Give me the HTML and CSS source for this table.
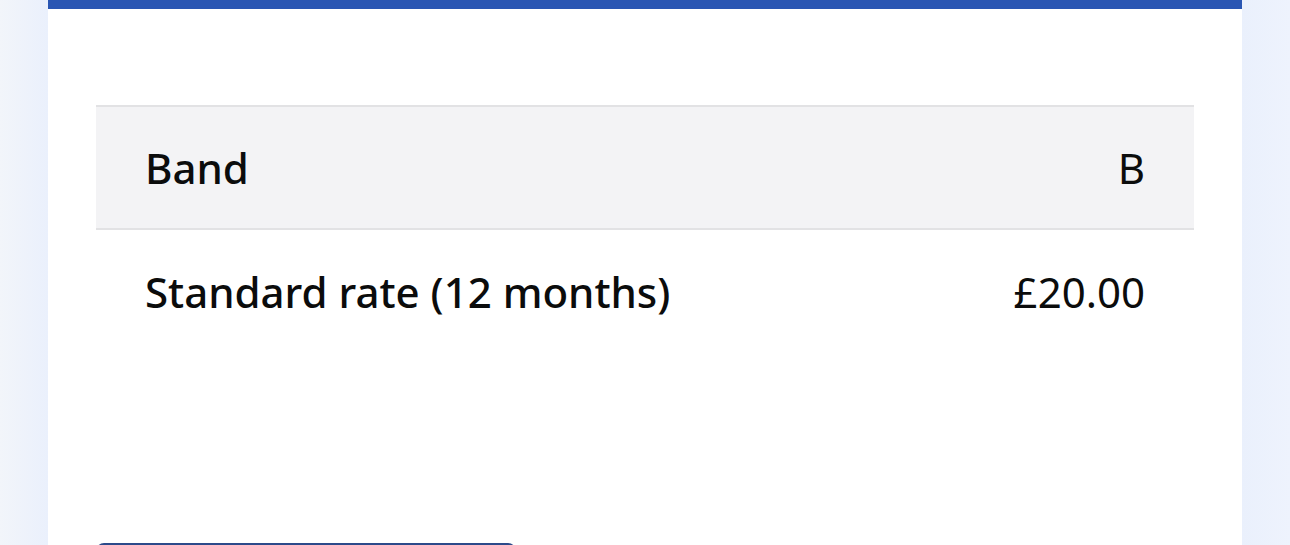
FILE: index.html
```html
<!DOCTYPE html>
<html lang="en">
<head>
<meta charset="utf-8">
<title>Band</title>
<link rel="stylesheet" href="styles.css">
</head>
<body>
<div class="page">
  <main class="card">
    <table class="rates">
      <tbody>
        <tr class="row row-head">
          <th class="cell label">Band</th>
          <td class="cell value">B</td>
        </tr>
        <tr class="row">
          <td class="cell label">Standard rate (12 months)</td>
          <td class="cell value">£20.00</td>
        </tr>
      </tbody>
    </table>
    <div class="actions">
      <button class="btn" type="button" aria-label="Continue"></button>
    </div>
  </main>
</div>
</body>
</html>
```

FILE: styles.css
```css
* { box-sizing: border-box; }
html, body { margin: 0; padding: 0; }
body {
  font-family: "Noto Sans", "Open Sans", sans-serif;
  color: #0b0c0c;
  background: linear-gradient(90deg, #f2f5fa 0, #eaf0fc 48px, #eaf0fc 1242px, #eef3fd 100%);
  height: 545px;
  overflow: hidden;
}
.page {
  padding: 0 48px;
}
.card {
  background: #ffffff;
  border-top: 9px solid #2a56b3;
  padding: 96px 48px 0;
  min-height: 600px;
}
.rates {
  width: 100%;
  border-collapse: collapse;
}
.row {
  border-top: 2px solid #e2e2e4;
}
.row-head {
  background: #f3f3f5;
}
.cell {
  height: 123px;
  padding: 0 49px;
  font-size: 42px;
  font-weight: 500;
  text-align: left;
  vertical-align: middle;
}
.cell.value {
  text-align: right;
  font-weight: 400;
}
.actions {
  padding-top: 191px;
}
.btn {
  display: block;
  width: 420px;
  height: 60px;
  border: 0;
  border-radius: 8px;
  background: #2c4a8a;
}
```
